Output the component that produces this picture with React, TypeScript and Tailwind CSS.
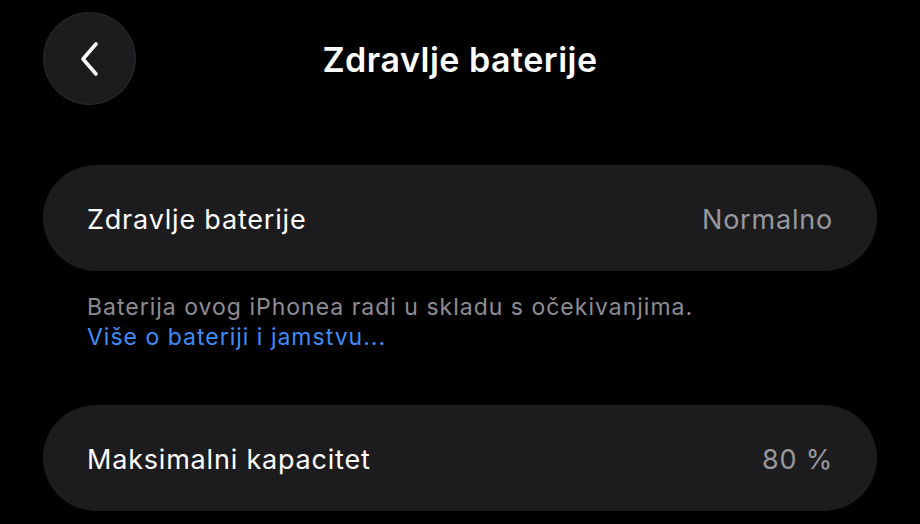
export default function App() {
  const font = { fontFamily: 'Inter, "Noto Sans", sans-serif' };

  return (
    <div className="w-[920px] h-[524px] overflow-hidden bg-black text-white" style={font}>
      {/* Header */}
      <div className="relative h-[118px] px-[43px] pt-[12px]">
        <button className="w-[93px] h-[93px] rounded-full bg-[#1c1c1e] border border-[#2c2c2e] flex items-center justify-center">
          <svg width="24" height="36" viewBox="0 0 24 36" fill="none">
            <path
              d="M18 3 L5 18 L18 33"
              stroke="#ffffff"
              strokeWidth="3.6"
              strokeLinecap="round"
              strokeLinejoin="round"
            />
          </svg>
        </button>
        <h1 className="absolute left-0 right-0 top-[37px] text-center text-[34px] leading-[46px] font-semibold tracking-[0.5px]">
          Zdravlje baterije
        </h1>
      </div>

      <div className="px-[43px] pt-[47px]">
        {/* Battery health */}
        <div className="h-[106px] rounded-full bg-[#1c1c1e] flex items-center justify-between pl-[44px] pr-[44px] pt-[3px]">
          <span className="text-[27px] leading-[32px] tracking-[0.8px]">Zdravlje baterije</span>
          <span className="text-[27px] leading-[32px] tracking-[0.8px] text-[#98989f]">Normalno</span>
        </div>

        <div className="pl-[44px] pt-[21px] text-[23px] leading-[30px] tracking-[1px]">
          <p className="text-[#8d8d93]">Baterija ovog iPhonea radi u skladu s očekivanjima.</p>
          <p className="text-[#3f8cf7]">Više o bateriji i jamstvu...</p>
        </div>

        {/* Max capacity */}
        <div className="mt-[53px] h-[106px] rounded-full bg-[#1c1c1e] flex items-center justify-between pl-[44px] pr-[44px] pt-[3px]">
          <span className="text-[27px] leading-[32px] tracking-[0.8px]">Maksimalni kapacitet</span>
          <span className="text-[27px] leading-[32px] tracking-[0.8px] text-[#98989f]">80 %</span>
        </div>
      </div>
    </div>
  );
}
